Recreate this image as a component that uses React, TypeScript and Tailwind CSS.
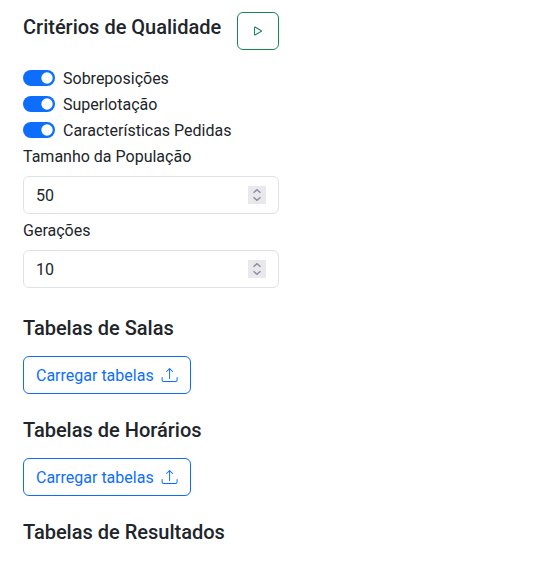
import { useState } from "react";
import { BsPlay, BsUpload } from "react-icons/bs";

function Switch({ label }: { label: string }) {
  const [on, setOn] = useState(true);
  return (
    <label className="mb-0.5 flex h-6 items-center gap-2">
      <button
        type="button"
        role="switch"
        aria-checked={on}
        aria-label={label}
        onClick={() => setOn(!on)}
        className={on ? "h-4 w-8 rounded-full bg-[#0d6efd]" : "h-4 w-8 rounded-full bg-[#adb5bd]"}
      >
        <svg width="32" height="16" viewBox="0 0 32 16">
          <circle cx={on ? 24 : 8} cy="8" r="5.7" fill="#fff" />
        </svg>
      </button>
      <span className="pt-0.5">{label}</span>
    </label>
  );
}

function NumberField({ label, initial }: { label: string; initial: number }) {
  const [value, setValue] = useState(initial);
  return (
    <div className="flex flex-col gap-[7px] pt-px">
      <span>{label}</span>
      <div className="flex h-[38px] w-64 items-center justify-between rounded-md border border-[#dee2e6] px-3">
        <span className="pt-0.5">{value}</span>
        <div className="flex size-[18px] flex-col bg-[#e9e9ed] text-[#8f8f9d]">
          <button type="button" aria-label="+" className="h-[9px]" onClick={() => setValue(value + 1)}>
            <svg width="18" height="9" viewBox="0 0 18 9" fill="none" stroke="currentColor" strokeWidth="1.5">
              <path d="M5.5 6.8 9 3.7l3.5 3.1" />
            </svg>
          </button>
          <button type="button" aria-label="-" className="h-[9px]" onClick={() => setValue(value - 1)}>
            <svg width="18" height="9" viewBox="0 0 18 9" fill="none" stroke="currentColor" strokeWidth="1.5">
              <path d="M5.5 2.2 9 5.3l3.5-3.1" />
            </svg>
          </button>
        </div>
      </div>
    </div>
  );
}

function UploadSection({ title }: { title: string }) {
  return (
    <section className="flex flex-col items-start gap-4">
      <h2 className="text-xl leading-6 font-medium">{title}</h2>
      <button
        type="button"
        className="flex h-[38px] items-center gap-2 rounded-md border border-[#0d6efd] px-3 text-[#0d6efd]"
      >
        <span className="pt-0.5">Carregar tabelas</span>
        <BsUpload size={16} className="-translate-x-[0.4px] overflow-visible" />
      </button>
    </section>
  );
}

export default function App() {
  return (
    <main className="flex min-h-screen flex-col gap-6 bg-white pt-3 pl-[23px] font-['Roboto',sans-serif] text-base leading-6 text-[#212529]">
      <section className="mb-1 w-64">
        <div className="mb-4 flex items-start justify-between">
          <h2 className="mt-[3px] text-xl leading-6 font-medium">Critérios de Qualidade</h2>
          <button
            type="button"
            aria-label="Executar"
            className="flex h-[38px] items-center rounded-md border border-[#198754] px-3 text-[#198754]"
          >
            <BsPlay size={16} />
          </button>
        </div>
        <Switch label="Sobreposições" />
        <Switch label="Superlotação" />
        <Switch label="Características Pedidas" />
        <div className="flex flex-col gap-1">
          <NumberField label="Tamanho da População" initial={50} />
          <NumberField label="Gerações" initial={10} />
        </div>
      </section>
      <UploadSection title="Tabelas de Salas" />
      <UploadSection title="Tabelas de Horários" />
      <h2 className="text-xl leading-6 font-medium">Tabelas de Resultados</h2>
    </main>
  );
}
